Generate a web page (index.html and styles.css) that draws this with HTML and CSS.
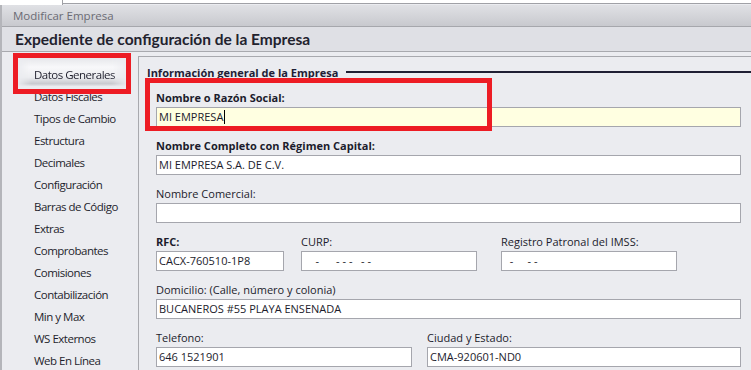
FILE: index.html
```html
<!DOCTYPE html>
<html lang="es">

<head>
    <meta charset="UTF-8">
    <meta name="viewport" content="width=device-width, initial-scale=1.0">
    <title>Modificar Empresa</title>
    <link rel="stylesheet" href="styles.css">
</head>

<body>
    <div class="top-strip">
        <div class="top-tab"></div>
        <div class="top-rest"></div>
    </div>

    <div class="window">
        <div class="title-bar">Modificar Empresa</div>
        <div class="header">Expediente de configuración de la Empresa</div>

        <div class="main">
            <ul class="nav">
                <li class="nav-item active">Datos Generales</li>
                <li class="nav-item">Datos Fiscales</li>
                <li class="nav-item">Tipos de Cambio</li>
                <li class="nav-item">Estructura</li>
                <li class="nav-item">Decimales</li>
                <li class="nav-item">Configuración</li>
                <li class="nav-item">Barras de Código</li>
                <li class="nav-item">Extras</li>
                <li class="nav-item">Comprobantes</li>
                <li class="nav-item">Comisiones</li>
                <li class="nav-item">Contabilización</li>
                <li class="nav-item">Min y Max</li>
                <li class="nav-item">WS Externos</li>
                <li class="nav-item">Web En Línea</li>
            </ul>

            <div class="panel">
                <div class="group-title">
                    <span>Información general de la Empresa</span>
                    <div class="group-line"></div>
                </div>

                <div class="form">
                    <div class="field">
                        <label class="bold">Nombre o Razón Social:</label>
                        <div class="input focused">MI EMPRESA<span class="caret"></span></div>
                    </div>

                    <div class="field">
                        <label class="bold">Nombre Completo con Régimen Capital:</label>
                        <div class="input">MI EMPRESA S.A. DE C.V.</div>
                    </div>

                    <div class="field">
                        <label>Nombre Comercial:</label>
                        <div class="input"></div>
                    </div>

                    <div class="row row-ids">
                        <div class="field">
                            <label class="bold">RFC:</label>
                            <div class="input">CACX-760510-1P8</div>
                        </div>
                        <div class="field">
                            <label>CURP:</label>
                            <div class="input mask">    -      - - -   - -</div>
                        </div>
                        <div class="field">
                            <label>Registro Patronal del IMSS:</label>
                            <div class="input mask">  -     - -</div>
                        </div>
                    </div>

                    <div class="field">
                        <label>Domicilio: (Calle, número y colonia)</label>
                        <div class="input">BUCANEROS #55 PLAYA ENSENADA</div>
                    </div>

                    <div class="row row-contact">
                        <div class="field">
                            <label>Telefono:</label>
                            <div class="input">646 1521901</div>
                        </div>
                        <div class="field">
                            <label>Ciudad y Estado:</label>
                            <div class="input">CMA-920601-ND0</div>
                        </div>
                    </div>
                </div>
            </div>
        </div>
    </div>

    <!-- marcas rojas de la captura -->
    <div class="mark mark-nav"></div>
    <div class="mark mark-field"></div>
</body>

</html>
```

FILE: styles.css
```css
body {
    margin: 0;
    padding: 0;
    width: 751px;
    height: 370px;
    overflow: hidden;
    position: relative;
    background-color: #ebecf0;
    font-family: "Open Sans", "Liberation Sans", sans-serif;
    color: #1c1c2c;
}

.top-strip {
    display: flex;
    height: 5px;
}

.top-tab {
    width: 62px;
    background-color: #ffffff;
    border-right: 1px solid #a0a1a6;
}

.top-rest {
    flex: 1;
    height: 3px;
    background-color: #ffffff;
    border-bottom: 1px solid #a0a1a6;
}

.window {
    border-left: 2px solid #b4b5ba;
}

.title-bar {
    height: 21px;
    line-height: 21px;
    padding-left: 11px;
    font-size: 11.5px;
    color: #6b6b74;
    background: linear-gradient(#e0e1e5, #c8c9ce);
    border-bottom: 1px solid #a6a7ac;
}

.header {
    height: 24px;
    line-height: 24px;
    padding-left: 13px;
    font-family: Lato, "Open Sans", sans-serif;
    font-size: 15.5px;
    font-weight: bold;
    color: #22222e;
    background-color: #dfe0e5;
    border-bottom: 1px solid #a8a9ae;
}

.main {
    display: flex;
}

/* Menu lateral */
.nav {
    list-style: none;
    margin: 0;
    padding: 5px 0 0 0;
    width: 136px;
    flex-shrink: 0;
}

.nav-item {
    height: 22px;
    line-height: 22px;
    padding-left: 32px;
    font-size: 11.5px;
    letter-spacing: -0.5px;
    color: #1e1e2c;
    white-space: nowrap;
}

.nav-item.active {
    box-sizing: border-box;
    height: 29px;
    padding-top: 7px;
    margin-left: 15px;
    margin-right: 10px;
    padding-left: 17px;
    background: linear-gradient(#e4e5e9 0%, #f8f8fa 35%, #ecedf0 70%, #c9cacf 92%, #e4e5e9 100%);
    -webkit-mask-image: linear-gradient(90deg, transparent 0, #000 14px, #000 95px, transparent 100%);
}

/* Panel de datos */
.panel {
    flex: 1;
    margin-top: 4px;
    border-top: 1px solid #a8a9ae;
    border-left: 1px solid #a8a9ae;
    padding: 7px 0 0 8px;
}

.group-title {
    display: flex;
    align-items: center;
    gap: 8px;
    height: 16px;
    font-size: 11px;
    font-weight: bold;
    color: #1e1e36;
    white-space: nowrap;
}

.group-line {
    flex: 1;
    height: 2px;
    background-color: #1f1f33;
}

.form {
    padding: 10px 0 0 9px;
    width: 585px;
}

.field {
    display: flex;
    flex-direction: column;
    margin-bottom: 11px;
}

.field label {
    height: 15px;
    line-height: 15px;
    margin-bottom: 2px;
    font-size: 11px;
    color: #1c1c2c;
    white-space: nowrap;
}

.field label.bold {
    font-weight: bold;
}

.input {
    height: 20px;
    line-height: 18px;
    box-sizing: border-box;
    padding-left: 2px;
    font-size: 11px;
    color: #1c1c2c;
    background-color: #ffffff;
    border: 1px solid #a5a6ad;
    white-space: pre;
    overflow: hidden;
}

.input.focused {
    background-color: #ffffe1;
}

.caret {
    display: inline-block;
    width: 1px;
    height: 14px;
    margin-left: 1px;
    vertical-align: -3px;
    background-color: #000000;
}

.row {
    display: flex;
}

.row-ids .field:nth-child(1) {
    width: 128px;
    margin-right: 17px;
}

.row-ids .field:nth-child(2) {
    width: 176px;
    margin-right: 24px;
}

.row-ids .field:nth-child(3) {
    width: 176px;
}

.row-contact .field:nth-child(1) {
    width: 256px;
    margin-right: 15px;
}

.row-contact .field:nth-child(2) {
    width: 314px;
}

/* Recuadros rojos */
.mark {
    position: absolute;
    box-sizing: border-box;
    border: 5px solid #ed1c24;
}

.mark-nav {
    left: 13px;
    top: 53px;
    width: 118px;
    height: 41px;
}

.mark-field {
    left: 145px;
    top: 78px;
    width: 347px;
    height: 53px;
}
```
